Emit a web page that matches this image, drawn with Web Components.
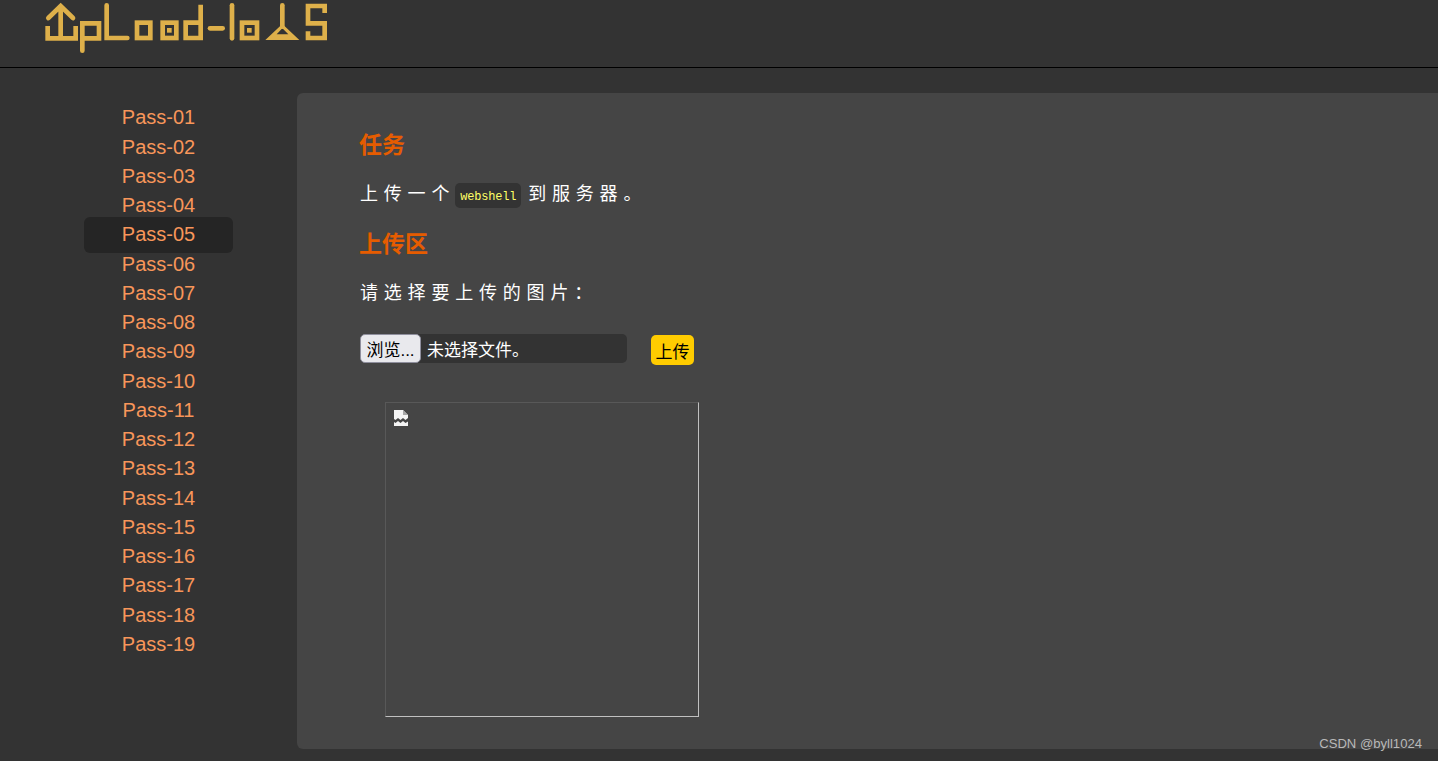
<!DOCTYPE html>
<html lang="zh">
<head>
<meta charset="utf-8">
<title>Upload-labs</title>
<style>
    html, body { margin: 0; height: 761px; overflow: hidden; background: #333; }
    body { font-family: "Liberation Sans", "Noto Sans CJK SC", sans-serif; color: #fff; }
    .layout { display: flex; align-items: flex-start; }
</style>
</head>
<body>
<upload-header></upload-header>
<div class="layout">
    <pass-nav active="5" count="19"></pass-nav>
    <upload-panel>
        <panel-heading>任务</panel-heading>
        <task-text>上传一个<inline-code>webshell</inline-code>到服务器。</task-text>
        <panel-heading>上传区</panel-heading>
        <task-text>请选择要上传的图片：</task-text>
        <file-picker></file-picker>
        <image-preview></image-preview>
    </upload-panel>
</div>
<site-mark>CSDN @byll1024</site-mark>

<script>
class UploadHeader extends HTMLElement {
    constructor() {
        super();
        this.attachShadow({ mode: "open" });
    }

    connectedCallback() {
        // Logo coordinates are in 3x units, so the viewBox is three times the size
        this.shadowRoot.innerHTML = `
            <style>
                :host {
                    display: block;
                    height: 67px;
                    border-bottom: 1px solid #000;
                    background: #333;
                }
                svg { display: block; margin-left: 30px; }
                g { fill: none; stroke: #deb04a; stroke-width: 14; stroke-linecap: round; stroke-linejoin: miter; }
                .sq { stroke-linecap: butt; }
                .dot { fill: #deb04a; stroke: none; }
            </style>
            <svg width="310" height="67" viewBox="0 0 930 201" role="img" aria-label="Upload-labs">
                <g>
                    <path d="M92 112V18M55 54L92 18L129 54"/>
                    <path class="sq" d="M53 78V115H137V78"/>
                    <path d="M157 152V70H207V115H157"/>
                    <path d="M230 16V114H292"/>
                    <rect class="sq" x="321" y="68" width="40" height="46"/>
                    <rect class="sq" x="398" y="68" width="41" height="46"/>
                    <path class="sq" d="M512 14V114H467V68H512"/>
                    <path d="M540 85H578"/>
                    <path d="M606 16V115"/>
                    <rect class="sq" x="636" y="68" width="45" height="46"/>
                    <path d="M757 16V80"/>
                    <path class="sq" d="M884 39V18H834V70H884V114H834V94"/>
                </g>
                <rect class="dot" x="411" y="84" width="14" height="14"/>
                <rect class="dot" x="651" y="84" width="14" height="14"/>
                <path class="dot" d="M757 72L808 120H706ZM757 85L740 103H775Z" fill-rule="evenodd"/>
            </svg>
        `;
    }
}

class PassNav extends HTMLElement {
    constructor() {
        super();
        this.attachShadow({ mode: "open" });
    }

    connectedCallback() {
        const count = Number(this.getAttribute("count"));
        const active = Number(this.getAttribute("active"));
        let links = "";
        for (let i = 1; i <= count; i++) {
            const name = "Pass-" + String(i).padStart(2, "0");
            links += `<a href="#" class="${i === active ? "on" : ""}">${name}</a>`;
        }
        this.shadowRoot.innerHTML = `
            <style>
                :host {
                    display: flex;
                    flex-direction: column;
                    flex: none;
                    box-sizing: border-box;
                    width: 297px;
                    padding: 35.4px 64px 0 84px;
                }
                a {
                    display: block;
                    margin: -3px 0;
                    padding: 3px 0;
                    border-radius: 6px;
                    font-size: 20px;
                    line-height: 29.25px;
                    text-align: center;
                    text-decoration: none;
                    color: #f8965a;
                }
                a.on { background: #252525; }
            </style>
            ${links}
        `;
    }
}

class UploadPanel extends HTMLElement {
    constructor() {
        super();
        this.attachShadow({ mode: "open" });
        this.shadowRoot.innerHTML = `
            <style>
                :host {
                    display: block;
                    flex: 1;
                    box-sizing: border-box;
                    height: 656px;
                    margin-top: 25px;
                    padding: 37px 63px 0;
                    border-radius: 6px 0 0 6px;
                    background: #454545;
                }
            </style>
            <slot></slot>
        `;
    }
}

class PanelHeading extends HTMLElement {
    constructor() {
        super();
        this.attachShadow({ mode: "open" });
        this.shadowRoot.innerHTML = `
            <style>
                :host {
                    display: block;
                    height: 30px;
                    margin-left: -1px;
                    font: bold 23px/30px "Liberation Sans", "Noto Sans CJK SC", sans-serif;
                    color: #e65c00;
                }
            </style>
            <slot></slot>
        `;
    }
}

class TaskText extends HTMLElement {
    constructor() {
        super();
        this.attachShadow({ mode: "open" });
        this.shadowRoot.innerHTML = `
            <style>
                :host {
                    display: block;
                    height: 30px;
                    margin: 19px 0 20px;
                    font-size: 18px;
                    line-height: 30px;
                    letter-spacing: 5.8px;
                    color: #fff;
                }
            </style>
            <slot></slot>
        `;
    }
}

class InlineCode extends HTMLElement {
    constructor() {
        super();
        this.attachShadow({ mode: "open" });
        this.shadowRoot.innerHTML = `
            <style>
                :host {
                    display: inline-block;
                    height: 25px;
                    margin-right: 7px;
                    padding: 0 5px;
                    border-radius: 5px;
                    background: #333;
                    font: 12px/29px "Liberation Mono", monospace;
                    letter-spacing: -0.2px;
                    color: #ffff66;
                    vertical-align: 0;
                }
            </style>
            <slot></slot>
        `;
    }
}

class FilePicker extends HTMLElement {
    constructor() {
        super();
        this.attachShadow({ mode: "open" });
        this.shadowRoot.innerHTML = `
            <style>
                :host {
                    display: flex;
                    align-items: flex-start;
                    gap: 24px;
                    margin-top: 26px;
                    font: 17px "Liberation Sans", "Noto Sans CJK SC", sans-serif;
                }
                .file {
                    display: flex;
                    align-items: center;
                    box-sizing: border-box;
                    width: 267px;
                    height: 29px;
                    border-radius: 5px;
                    background: #333;
                    color: #fff;
                }
                .browse {
                    box-sizing: border-box;
                    width: 61px;
                    height: 29px;
                    margin-right: 6px;
                    padding: 0;
                    border: 1px solid #8f8f9d;
                    border-radius: 5px;
                    background: #e9e9ed;
                    font: inherit;
                    color: #000;
                }
                .go {
                    width: 43px;
                    height: 30px;
                    margin-top: 1px;
                    padding: 0;
                    border: 0;
                    border-radius: 5px;
                    background: #ffcc00;
                    font: inherit;
                    color: #000;
                }
            </style>
            <div class="file">
                <button class="browse" type="button">浏览...</button>
                <span>未选择文件。</span>
            </div>
            <button class="go" type="button">上传</button>
        `;
    }
}

class ImagePreview extends HTMLElement {
    constructor() {
        super();
        this.attachShadow({ mode: "open" });
        this.shadowRoot.innerHTML = `
            <style>
                :host {
                    display: block;
                    box-sizing: border-box;
                    width: 314px;
                    height: 315px;
                    margin: 37px 0 0 25px;
                    padding: 6px 0 0 7px;
                    border: 1px solid;
                    border-color: #585858 #c0c0c0 #c0c0c0 #585858;
                }
                svg { display: block; }
            </style>
            <svg width="16" height="18" viewBox="0 0 16 18" role="img" aria-label="图片加载失败">
                <path fill="#f4f4f4" d="M1 1H10L15 6V9L12.500 11 10 9 7.500 11 5 9 2.500 11 1 10Z"/>
                <path fill="#f4f4f4" d="M1 13L2.500 14 5 12 7.500 14 10 12 12.500 14 15 12.500V17H1Z"/>
                <path fill="#a8a8a8" d="M10 1V6H15Z"/>
            </svg>
        `;
    }
}

class SiteMark extends HTMLElement {
    constructor() {
        super();
        this.attachShadow({ mode: "open" });
        this.shadowRoot.innerHTML = `
            <style>
                :host {
                    position: absolute;
                    right: 16px;
                    top: 735px;
                    font: 13.1px/17px "Liberation Sans", sans-serif;
                    color: #b9b9b9;
                }
            </style>
            <slot></slot>
        `;
    }
}

customElements.define("upload-header", UploadHeader);
customElements.define("pass-nav", PassNav);
customElements.define("upload-panel", UploadPanel);
customElements.define("panel-heading", PanelHeading);
customElements.define("task-text", TaskText);
customElements.define("inline-code", InlineCode);
customElements.define("file-picker", FilePicker);
customElements.define("image-preview", ImagePreview);
customElements.define("site-mark", SiteMark);
</script>
</body>
</html>
